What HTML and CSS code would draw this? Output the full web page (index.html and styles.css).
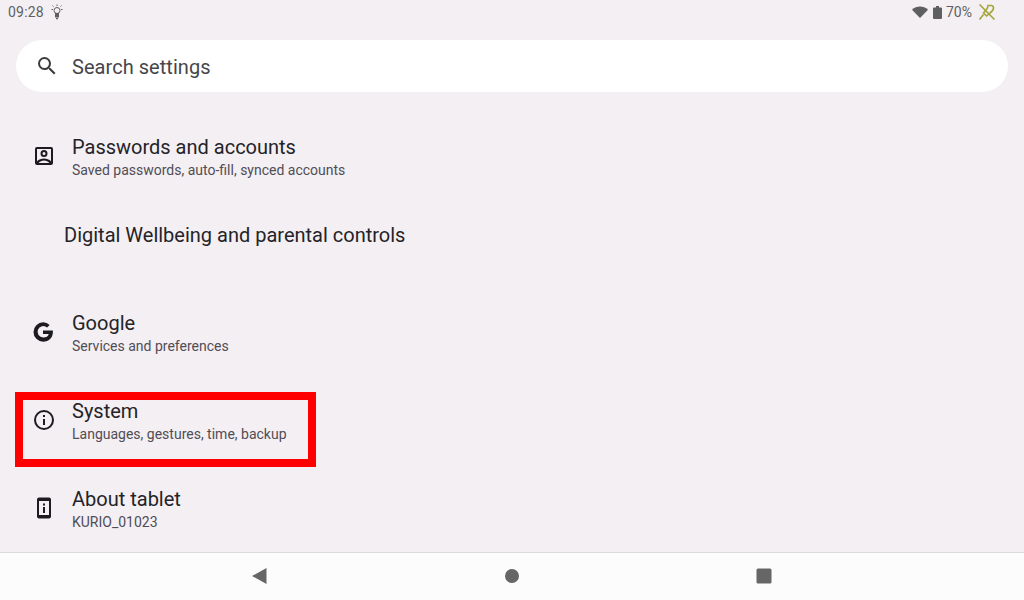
FILE: index.html
```html
<!DOCTYPE html>
<html lang="en">
<head>
<meta charset="utf-8">
<title>Settings</title>
<link rel="stylesheet" href="styles.css">
</head>
<body>
<div class="screen">
  <header class="status">
    <div class="status-left">
      <span class="clock">09:28</span>
      <svg class="bulb" viewBox="0 0 14 16" width="14" height="16"><g fill="none" stroke="#5f5f62" stroke-width="1"><path d="M7 .5v1.500M2.500 1.500l1 1M11.500 1.500l-1 1M1.500 5.500h1.500M11 5.500h1.500"/><circle cx="7" cy="6.500" r="3"/></g><path d="M5 9h4v4.500H5z" fill="#5f5f62"/><path d="M6 14h2v1.200H6z" fill="#5f5f62"/></svg>
    </div>
    <div class="status-right">
      <svg class="wifi" viewBox="0 0 16 12" width="16" height="12"><path d="M0 3.800C4.500-.6 11.500-.6 16 3.800L8 12z" fill="#5f5f62"/></svg>
      <svg class="battery" viewBox="0 0 9 13" width="9" height="13"><path d="M3 0h3v1.500h2a1 1 0 0 1 1 1V12a1 1 0 0 1-1 1H1a1 1 0 0 1-1-1V2.500a1 1 0 0 1 1-1h2z" fill="#5f5f62"/></svg>
      <span class="pct">70%</span>
      <svg class="nolink" viewBox="0 0 18 16" width="18" height="16"><g fill="none" stroke="#a3a53a" stroke-width="1.600"><path d="M1.500 .5l15 15"/><path d="M10 1.500h3.500a2.500 2.500 0 0 1 2 2.500c0 2-1.500 3.500-3.500 5l-3.500 3-3-3 3-3.500c1-1.500 1.500-3 1.500-4z"/><path d="M5.500 10.500 1.500 15.500"/></g></svg>
    </div>
  </header>

  <div class="search">
    <svg class="search-icon" viewBox="0 0 24 24" width="24" height="24"><path d="M15.500 14h-.79l-.28-.27A6.470 6.470 0 0 0 16 9.500 6.500 6.500 0 1 0 9.500 16c1.610 0 3.090-.59 4.230-1.570l.27.28v.79l5 4.990L20.490 19l-4.990-5zm-6 0C7.010 14 5 11.990 5 9.500S7.010 5 9.500 5 14 7.010 14 9.500 11.990 14 9.500 14z" fill="#3c3b40"/></svg>
    <span class="search-label">Search settings</span>
  </div>

  <main class="list">
    <div class="row">
      <svg class="icon" viewBox="0 0 24 24" width="24" height="24"><path d="M3 5a2 2 0 0 1 2-2h14a2 2 0 0 1 2 2v14a2 2 0 0 1-2 2H5a2 2 0 0 1-2-2zm2 0v12.300C6.800 15.500 9.300 14.500 12 14.500s5.200 1 7 2.800V5zm1.500 14h11c-1.400-1.600-3.300-2.500-5.500-2.500S7.900 17.400 6.500 19zM12 6a3.500 3.500 0 1 1 0 7 3.500 3.500 0 0 1 0-7zm0 2a1.500 1.500 0 1 0 0 3 1.500 1.500 0 0 0 0-3z" fill="#1c1b1f" fill-rule="evenodd"/></svg>
      <div class="text">
        <div class="title">Passwords and accounts</div>
        <div class="sub">Saved passwords, auto-fill, synced accounts</div>
      </div>
    </div>
    <div class="row row-plain">
      <div class="title">Digital Wellbeing and parental controls</div>
    </div>
    <div class="row">
      <svg class="icon icon-g" viewBox="0 0 24 24" width="24" height="24"><path d="M21.800 10.500H12v3.400h5.800c-.6 2.300-2.700 3.600-5.600 3.600a5.700 5.700 0 1 1 3.900-9.900l2.500-2.500A9.400 9.400 0 0 0 12.200 2.300a9.700 9.700 0 1 0 0 19.400c5.500 0 9.700-3.800 9.700-9.700 0-.5 0-1-.1-1.500z" fill="#1c1b1f"/></svg>
      <div class="text">
        <div class="title">Google</div>
        <div class="sub">Services and preferences</div>
      </div>
    </div>
    <div class="row row-marked">
      <svg class="icon" viewBox="0 0 24 24" width="24" height="24"><path d="M11 7h2v2h-2zm0 4h2v6h-2zm1-9a10 10 0 1 0 0 20 10 10 0 0 0 0-20zm0 18a8 8 0 1 1 0-16 8 8 0 0 1 0 16z" fill="#1c1b1f"/></svg>
      <div class="text">
        <div class="title">System</div>
        <div class="sub">Languages, gestures, time, backup</div>
      </div>
      <div class="marker"></div>
    </div>
    <div class="row">
      <svg class="icon" viewBox="0 0 24 24" width="24" height="24"><path d="M7 1.500h10a2 2 0 0 1 2 2v17a2 2 0 0 1-2 2H7a2 2 0 0 1-2-2v-17a2 2 0 0 1 2-2zM7 5v14h10V5zm4 2.500h2v2h-2zm0 3.500h2v6h-2z" fill="#1c1b1f" fill-rule="evenodd"/></svg>
      <div class="text">
        <div class="title">About tablet</div>
        <div class="sub">KURIO_01023</div>
      </div>
    </div>
  </main>

  <nav class="navbar">
    <svg class="nav-btn" viewBox="0 0 16 16" width="16" height="16"><path d="M0 8 14.500 0v16z" fill="#666"/></svg>
    <svg class="nav-btn" viewBox="0 0 16 16" width="16" height="16"><circle cx="8" cy="8" r="7" fill="#666"/></svg>
    <svg class="nav-btn" viewBox="0 0 16 16" width="16" height="16"><rect x="0.500" y="0.500" width="15" height="15" rx="1.500" fill="#666"/></svg>
  </nav>
</div>
</body>
</html>
```
FILE: styles.css
```css
* { box-sizing: border-box; }
html, body { margin: 0; padding: 0; }
body { font-family: Roboto, "Liberation Sans", sans-serif; }
.screen {
  width: 1024px;
  height: 600px;
  background: #f4eff3;
  display: flex;
  flex-direction: column;
  overflow: hidden;
}
.status {
  height: 24px;
  flex: none;
  display: flex;
  justify-content: space-between;
  align-items: center;
  padding: 0 28px 0 8px;
  color: #5f5f62;
  font-size: 14px;
}
.status-left, .status-right { display: flex; align-items: center; }
.clock { letter-spacing: 0.2px; }
.bulb { margin-left: 6px; }
.wifi { margin-left: 1px; margin-right: 5px; }
.battery { margin-right: 4px; }
.pct { margin-right: 6px; }
.search {
  margin: 16px 16px 0;
  height: 52px;
  flex: none;
  border-radius: 26px;
  background: #fff;
  display: flex;
  align-items: center;
  padding-left: 19px;
}
.search-label {
  margin-left: 13px;
  padding-top: 2px;
  font-size: 20px;
  letter-spacing: 0.05px;
  color: #46464a;
}
.list {
  margin-top: 20px;
  flex: 1;
  display: flex;
  flex-direction: column;
}
.row {
  height: 88px;
  flex: none;
  display: flex;
  align-items: center;
  padding-left: 32px;
  position: relative;
}
.row-plain { padding-left: 64px; padding-bottom: 18px; }
.icon { flex: none; }
.icon-g { margin-left: -1px; margin-right: 1px; }
.text { margin-left: 16px; padding-top: 2px; }
.title {
  font-size: 20px;
  font-weight: 380;
  line-height: 24px;
  color: #242328;
}
.sub {
  font-size: 14px;
  font-weight: 380;
  line-height: 20px;
  color: #504d56;
  margin-top: 1px;
}
.marker {
  position: absolute;
  left: 15px;
  top: 16px;
  width: 301px;
  height: 75px;
  border: 8px solid #f00;
}
.navbar {
  height: 48px;
  flex: none;
  background: #fcfcfc;
  border-top: 1px solid #dcd9dc;
  padding-bottom: 2px;
  display: flex;
  justify-content: center;
  align-items: center;
  gap: 236px;
}
```
